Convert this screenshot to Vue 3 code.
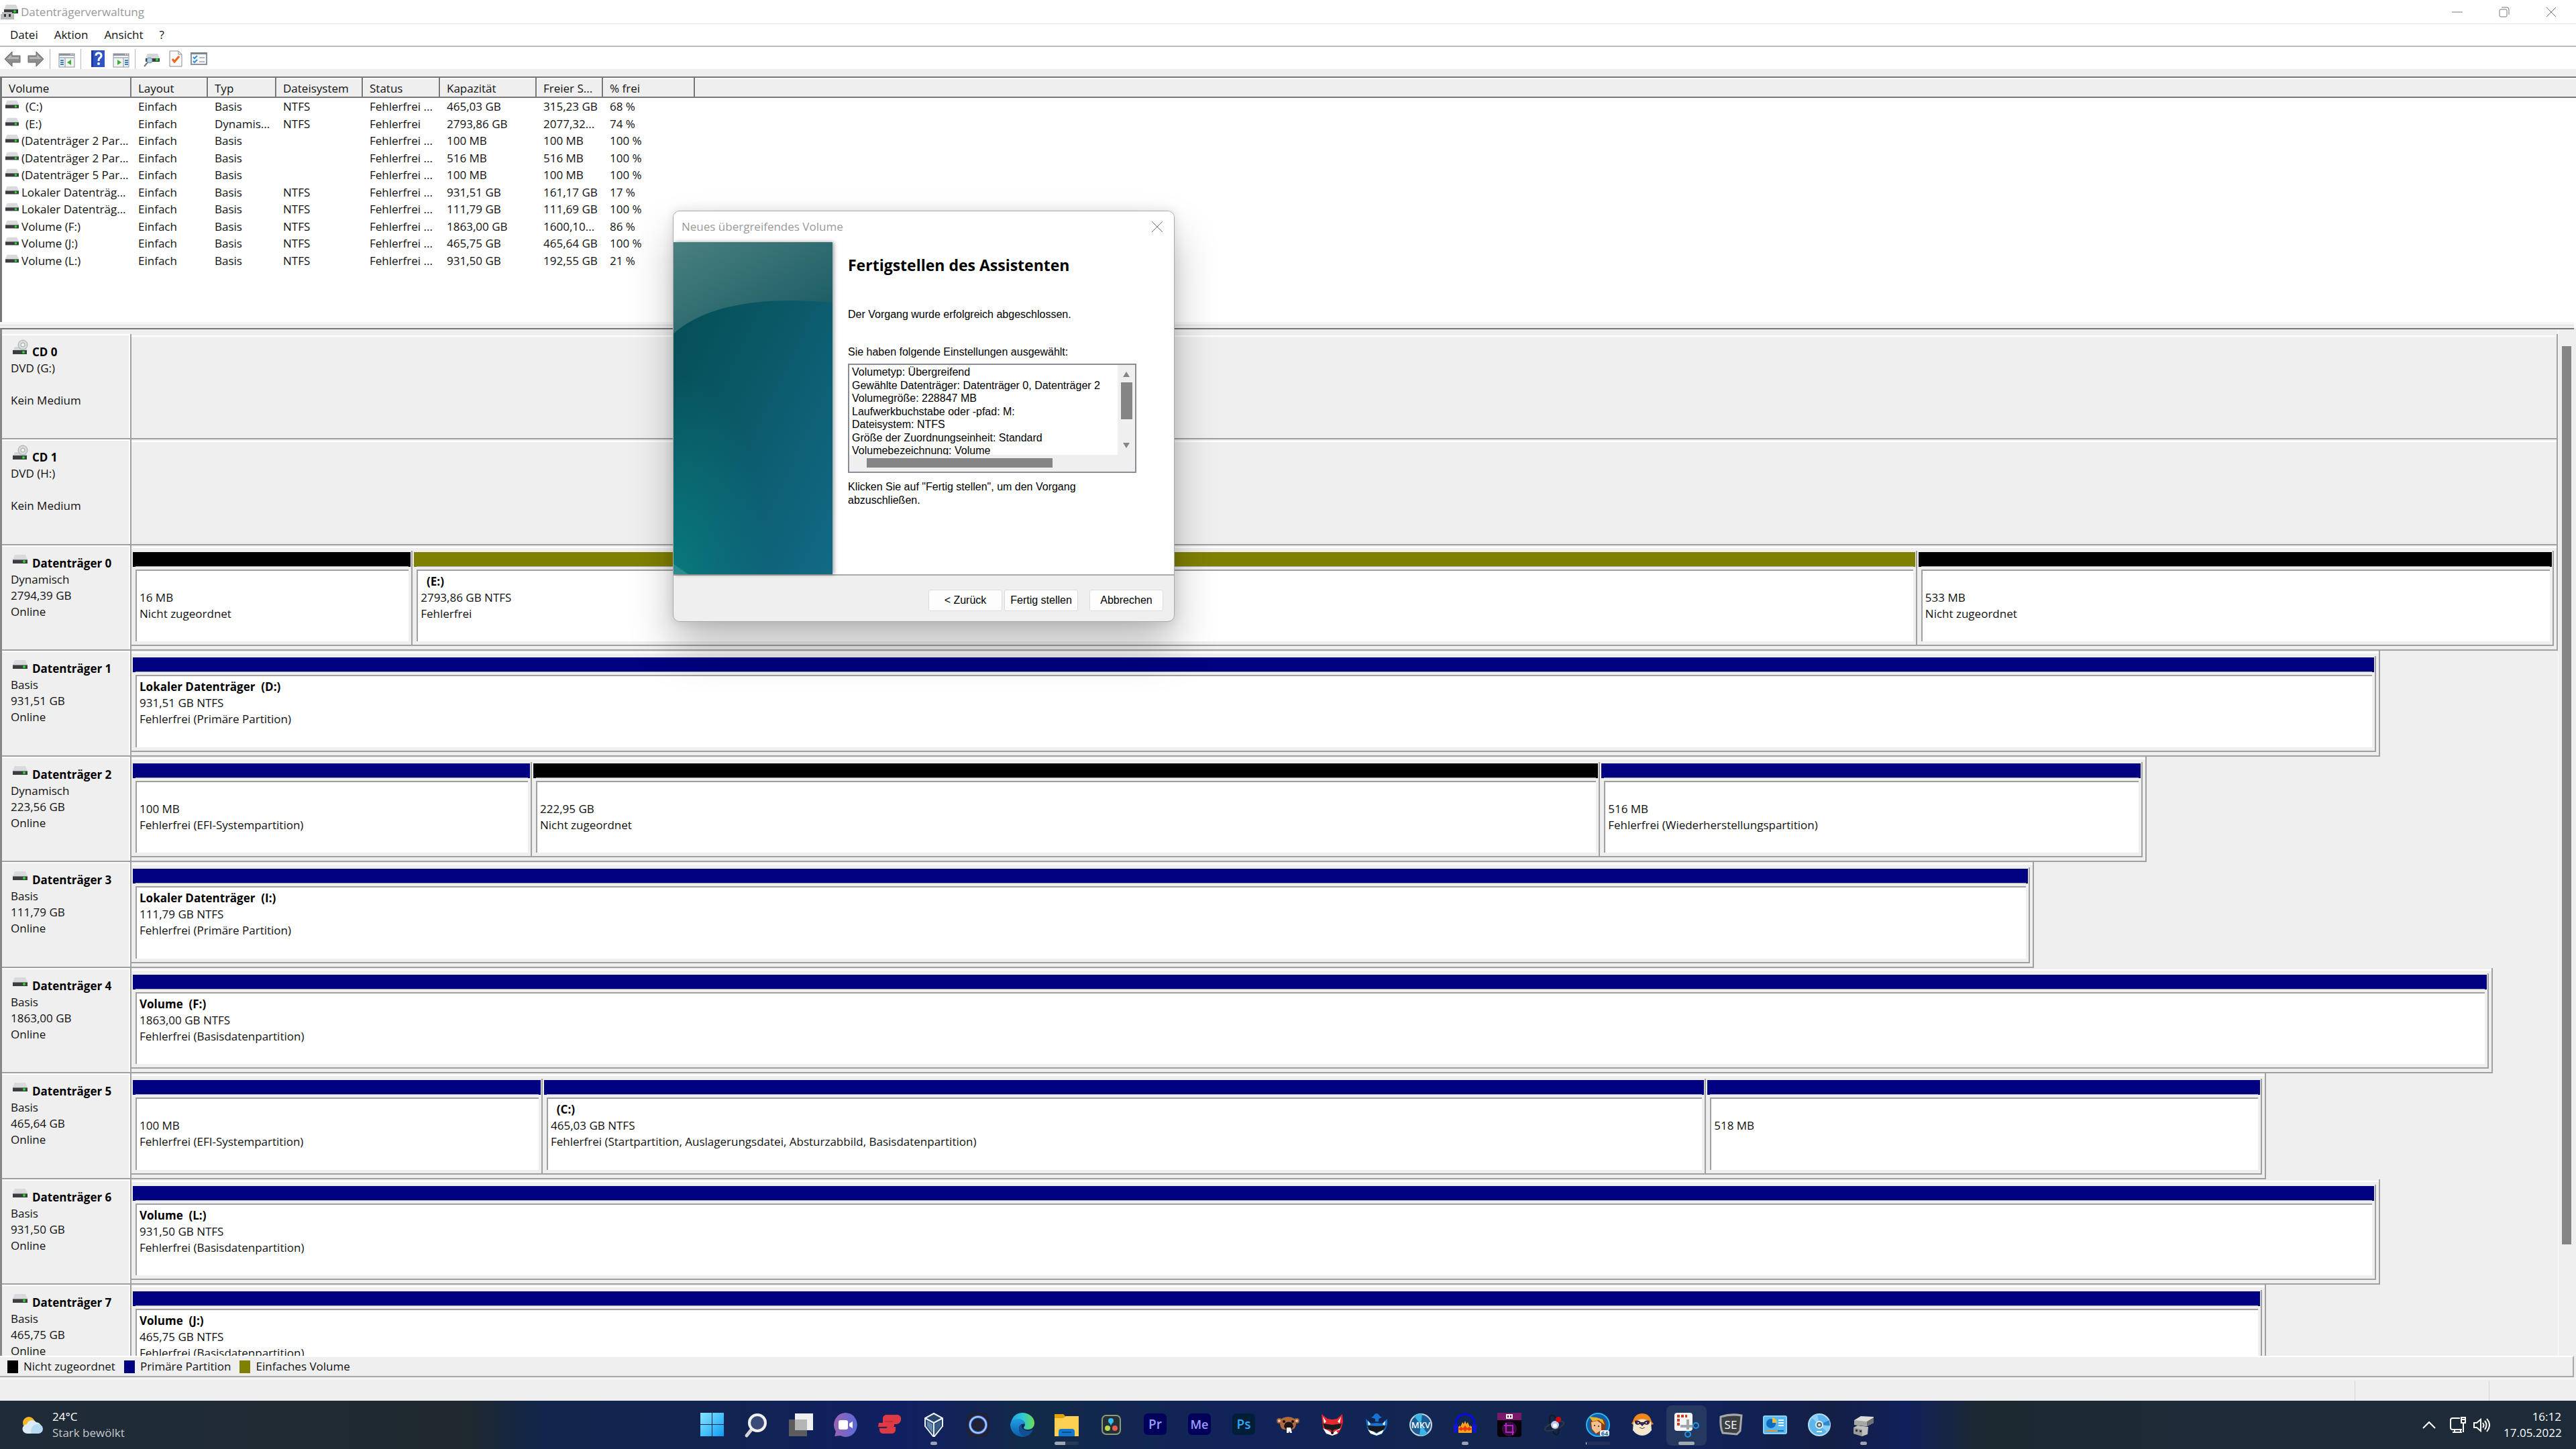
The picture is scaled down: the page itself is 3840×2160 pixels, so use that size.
<script setup>
const columns = [
  { title: 'Volume', width: 193 },
  { title: 'Layout', width: 114 },
  { title: 'Typ', width: 102 },
  { title: 'Dateisystem', width: 129 },
  { title: 'Status', width: 115 },
  { title: 'Kapazität', width: 144 },
  { title: 'Freier S...', width: 99 },
  { title: '% frei', width: 137 },
]

const volumes = [
  ['(C:)', 'Einfach', 'Basis', 'NTFS', 'Fehlerfrei ...', '465,03 GB', '315,23 GB', '68 %'],
  ['(E:)', 'Einfach', 'Dynamis...', 'NTFS', 'Fehlerfrei', '2793,86 GB', '2077,32...', '74 %'],
  ['(Datenträger 2 Par...', 'Einfach', 'Basis', '', 'Fehlerfrei ...', '100 MB', '100 MB', '100 %'],
  ['(Datenträger 2 Par...', 'Einfach', 'Basis', '', 'Fehlerfrei ...', '516 MB', '516 MB', '100 %'],
  ['(Datenträger 5 Par...', 'Einfach', 'Basis', '', 'Fehlerfrei ...', '100 MB', '100 MB', '100 %'],
  ['Lokaler Datenträg...', 'Einfach', 'Basis', 'NTFS', 'Fehlerfrei ...', '931,51 GB', '161,17 GB', '17 %'],
  ['Lokaler Datenträg...', 'Einfach', 'Basis', 'NTFS', 'Fehlerfrei ...', '111,79 GB', '111,69 GB', '100 %'],
  ['Volume (F:)', 'Einfach', 'Basis', 'NTFS', 'Fehlerfrei ...', '1863,00 GB', '1600,10...', '86 %'],
  ['Volume (J:)', 'Einfach', 'Basis', 'NTFS', 'Fehlerfrei ...', '465,75 GB', '465,64 GB', '100 %'],
  ['Volume (L:)', 'Einfach', 'Basis', 'NTFS', 'Fehlerfrei ...', '931,50 GB', '192,55 GB', '21 %'],
]

// span: share of the graph's full width, in units where the largest disk is FULL_SPAN
const FULL_SPAN = 3616
const disks = [
  { name: 'CD 0', cd: true, lines: ['DVD (G:)', '', 'Kein Medium'], span: 3616, parts: [] },
  { name: 'CD 1', cd: true, lines: ['DVD (H:)', '', 'Kein Medium'], span: 3616, parts: [] },
  {
    name: 'Datenträger 0', lines: ['Dynamisch', '2794,39 GB', 'Online'], span: 3616,
    parts: [
      { span: 418, kind: 'free', name: '', size: '16 MB', state: 'Nicht zugeordnet' },
      { span: 2245, kind: 'simple', name: '\u00a0 (E:)', size: '2793,86 GB NTFS', state: 'Fehlerfrei' },
      { span: 949, kind: 'free', name: '', size: '533 MB', state: 'Nicht zugeordnet' },
    ],
  },
  {
    name: 'Datenträger 1', lines: ['Basis', '931,51 GB', 'Online'], span: 3351,
    parts: [{ span: 1, kind: 'primary', name: 'Lokaler Datenträger \u00a0(D:)', size: '931,51 GB NTFS', state: 'Fehlerfrei (Primäre Partition)' }],
  },
  {
    name: 'Datenträger 2', lines: ['Dynamisch', '223,56 GB', 'Online'], span: 3003,
    parts: [
      { span: 596, kind: 'primary', name: '', size: '100 MB', state: 'Fehlerfrei (EFI-Systempartition)' },
      { span: 1593, kind: 'free', name: '', size: '222,95 GB', state: 'Nicht zugeordnet' },
      { span: 808, kind: 'primary', name: '', size: '516 MB', state: 'Fehlerfrei (Wiederherstellungspartition)' },
    ],
  },
  {
    name: 'Datenträger 3', lines: ['Basis', '111,79 GB', 'Online'], span: 2835,
    parts: [{ span: 1, kind: 'primary', name: 'Lokaler Datenträger \u00a0(I:)', size: '111,79 GB NTFS', state: 'Fehlerfrei (Primäre Partition)' }],
  },
  {
    name: 'Datenträger 4', lines: ['Basis', '1863,00 GB', 'Online'], span: 3519,
    parts: [{ span: 1, kind: 'primary', name: 'Volume \u00a0(F:)', size: '1863,00 GB NTFS', state: 'Fehlerfrei (Basisdatenpartition)' }],
  },
  {
    name: 'Datenträger 5', lines: ['Basis', '465,64 GB', 'Online'], span: 3181,
    parts: [
      { span: 612, kind: 'primary', name: '', size: '100 MB', state: 'Fehlerfrei (EFI-Systempartition)' },
      { span: 1735, kind: 'primary', name: '\u00a0 (C:)', size: '465,03 GB NTFS', state: 'Fehlerfrei (Startpartition, Auslagerungsdatei, Absturzabbild, Basisdatenpartition)' },
      { span: 828, kind: 'primary', name: '', size: '518 MB', state: '' },
    ],
  },
  {
    name: 'Datenträger 6', lines: ['Basis', '931,50 GB', 'Online'], span: 3351,
    parts: [{ span: 1, kind: 'primary', name: 'Volume \u00a0(L:)', size: '931,50 GB NTFS', state: 'Fehlerfrei (Basisdatenpartition)' }],
  },
  {
    name: 'Datenträger 7', lines: ['Basis', '465,75 GB', 'Online'], span: 3181,
    parts: [{ span: 1, kind: 'primary', name: 'Volume \u00a0(J:)', size: '465,75 GB NTFS', state: 'Fehlerfrei (Basisdatenpartition)' }],
  },
]

const legend = [
  { kind: 'free', label: 'Nicht zugeordnet' },
  { kind: 'primary', label: 'Primäre Partition' },
  { kind: 'simple', label: 'Einfaches Volume' },
]

const summary = [
  'Volumetyp: Übergreifend',
  'Gewählte Datenträger: Datenträger 0, Datenträger 2',
  'Volumegröße: 228847 MB',
  'Laufwerkbuchstabe oder -pfad: M:',
  'Dateisystem: NTFS',
  'Größe der Zuordnungseinheit: Standard',
  'Volumebezeichnung: Volume',
]

const drive = '<path d="M3 0h16l3 7H0z" fill="#d9dadd"/><path d="M0 7h22v6H0z" fill="#3b3e41"/><path d="M0 7h22v1H0z" fill="#77797c"/><circle cx="17" cy="10" r="2" fill="#22e02a"/>'
const consoleArt = '<rect x="1" y="5" width="23" height="20" fill="#f3f4f6" stroke="#8d949c"/><path d="M1 5h23v3H1z" fill="#8d949c"/><path d="M1 10h23v2H1z" fill="#b6bcc4"/><path d="M18 6h2M21 6h2" stroke="#fff"/>'

const tools = [
  { name: 'Zurück', art: '<path d="M1 13 12 2v6h12v10H12v6z" fill="#8e8e8e" stroke="#6a6a6a"/><path d="M4 13l7-7v4h11v3z" fill="#b4b4b4"/>' },
  { name: 'Vorwärts', art: '<path d="M24 13 13 2v6H1v10h12v6z" fill="#8e8e8e" stroke="#6a6a6a"/><path d="M21 13l-7-7v4H3v3z" fill="#b4b4b4"/>', end: true },
  { name: 'Konsolenstruktur einblenden', art: consoleArt + '<path d="M3 15h5M3 18h5M3 21h5" stroke="#3f7fbf" stroke-width="2"/><path d="M10 12v13" stroke="#8d949c"/><path d="M19 14v8l-6-4z" fill="#3fae29"/>', end: true },
  { name: 'Hilfe', art: '<rect x="3" y="0" width="20" height="25" fill="#2f55c4"/><path d="M3 0h3v25H3z" fill="#1f3c99"/><path d="M10 8q0-4 4-4t4 4q0 2-3 4-1 1-1 4" fill="none" stroke="#fff" stroke-width="3"/><circle cx="14" cy="20" r="2" fill="#fff"/>' },
  { name: 'Aktionsbereich einblenden', art: consoleArt + '<path d="M18 15h5M18 18h5M18 21h5" stroke="#3f7fbf" stroke-width="2"/><path d="M16 12v13" stroke="#8d949c"/><path d="M7 14v8l6-4z" fill="#3fae29"/>', end: true },
  { name: 'Datenträger neu einlesen', art: '<path d="M6 5h15l3 7H3z" fill="#d4d6d8"/><path d="M3 12h21v5H3z" fill="#3b3e41"/><circle cx="20" cy="14" r="2" fill="#22e02a"/><circle cx="9" cy="15" r="4" fill="#a9cfe6" stroke="#7894a6"/><path d="M6 18l-5 6" stroke="#66798a" stroke-width="2"/>' },
  { name: 'Eigenschaften', art: '<path d="M4 1h13l5 5v18H4z" fill="#fafafa" stroke="#8b8b8b"/><path d="M17 1v5h5" fill="none" stroke="#8b8b8b"/><path d="M8 13l3 4 7-8" fill="none" stroke="#f2641c" stroke-width="3"/>' },
  { name: 'Aufgabenliste', art: '<rect x="1" y="4" width="23" height="17" fill="#f6f7f8" stroke="#8d949c" stroke-width="2"/><path d="M0 3h25v3H0z" fill="#7d858d"/><path d="M4 10l2 2 4-4M4 16l2 2 4-4" fill="none" stroke="#2f8fd8" stroke-width="2"/><path d="M13 11h8M13 17h8" stroke="#b4bac0" stroke-width="2"/>' },
]

const apps = [
  { name: 'Start', art: '<defs><linearGradient id="win" gradientUnits="userSpaceOnUse" x1="0" y1="0" x2="36" y2="36"><stop offset="0" stop-color="#8be2ff"/><stop offset=".5" stop-color="#48c3fb"/><stop offset="1" stop-color="#0c95f5"/></linearGradient></defs><path d="M0 0h17v17H0zM18 0h17v17H18zM0 18h17v17H0zM18 18h17v17H18z" fill="url(#win)"/>' },
  { name: 'Suche', art: '<path d="M11 24 3 34" stroke="#d4d4d4" stroke-width="5" stroke-linecap="round"/><circle cx="19" cy="15" r="12" fill="#3a4a76" stroke="#f0f0f0" stroke-width="4"/>' },
  { name: 'Taskansicht', art: '<rect x="0" y="10" width="27" height="25" fill="#5c5c5c"/><rect x="9" y="1" width="27" height="25" fill="#f0f0f0"/><rect x="9" y="10" width="18" height="16" fill="#b5b5b5"/>' },
  { name: 'Chat', art: '<defs><linearGradient id="cha" x1="0" x2="1"><stop offset="0" stop-color="#9a63b4"/><stop offset="1" stop-color="#5b6ad8"/></linearGradient></defs><path d="M18 0a17 18 0 1 1-7 34l-9 1 2-7A17 18 0 0 1 18 0z" fill="url(#cha)"/><rect x="8" y="11" width="14" height="14" rx="3" fill="#fff"/><path d="M24 16l5-3v10l-5-3z" fill="#fff"/>' },
  { name: 'ExpressVPN', art: '<path d="M14 3h16a6 6 0 0 1 5 8 7 7 0 0 1-7 6h-3a4 4 0 0 1-1 4h3v5a6 6 0 0 1-6 5H9a6 6 0 0 1-6-5v-3h11v-2H1l1-6h6V8a6 6 0 0 1 6-5z" fill="#dd3a44"/><path d="M11 13h12M3 21h12" stroke="#a8222e"/>' },
  { name: 'VirtualBox', on: 'dot', art: '<path d="M18 1 31 8v12L19 35h-2L5 20V8z" fill="#26456b" stroke="#eef2f6" stroke-width="2"/><path d="M5 8l13 7 13-7M18 15v20" fill="none" stroke="#eef2f6" stroke-width="2"/><path d="M8 12l8 5v13L8 20z" fill="#6288b2"/><path d="M28 12l-8 5v13l8-10z" fill="#375d89"/>' },
  { name: 'Cortana', art: '<rect x="1" y="0" width="34" height="36" rx="9" fill="#1e2234"/><circle cx="18" cy="18" r="12" fill="none" stroke="#6d5df0" stroke-width="4"/><circle cx="18" cy="18" r="12" fill="none" stroke="#8be3fb" stroke-width="2"/>' },
  { name: 'Microsoft Edge', art: '<defs><linearGradient id="eda" x1="0" x2="1"><stop offset="0" stop-color="#1fa7e0"/><stop offset=".5" stop-color="#30c6d8"/><stop offset="1" stop-color="#69e04e"/></linearGradient><linearGradient id="edb" x1="0" y1="0" x2="0" y2="1"><stop offset="0" stop-color="#1ea0e4"/><stop offset="1" stop-color="#0c59a4"/></linearGradient></defs><path d="M1 15C3 5 10 0 18 0c10 0 18 7 18 15 0 7-5 10-10 10-4 0-6-1-6-3 0-1 2-2 2-5 0-4-4-7-9-7-6 0-10 2-12 5z" fill="url(#eda)"/><path d="M0 18C0 12 6 9 13 9c5 0 9 4 9 8-4-2-9 1-9 7 0 6 5 11 11 11-12 4-24-5-24-17z" fill="url(#edb)"/><path d="M13 24c0-4 2-6 4-7-1 6 3 10 9 10 4 0 8-2 8-2-3 7-8 10-12 10-5 0-9-5-9-11z" fill="#124f97"/>' },
  { name: 'Explorer', on: 'group', art: '<path d="M0 2h13l4 4v5H0z" fill="#e3a008"/><path d="M0 8h13l4-3h19v30H0z" fill="#fcd053"/><path d="M6 35V28a4 4 0 0 1 4-4h16a4 4 0 0 1 4 4v7z" fill="#1277cf"/><path d="M11 29h14" stroke="#0b4a8c" stroke-width="2"/>' },
  { name: 'DaVinci Resolve', art: '<rect x="5" y="4" width="27" height="28" rx="6" fill="#25303b" stroke="#8d9b76" stroke-width="2"/><circle cx="18" cy="12" r="4" fill="#35bdf0"/><path d="M15 13l3 6 3-6z" fill="#35bdf0"/><circle cx="13" cy="23" r="4" fill="#b8dc4a"/><circle cx="24" cy="23" r="4" fill="#f05a4c"/>' },
  { name: 'Premiere Pro', art: '<rect x="1" y="1" width="34" height="32" rx="6" fill="#00005b"/><text x="18" y="24" text-anchor="middle" font-family="Open Sans" font-weight="600" font-size="19" fill="#9d99ff">Pr</text>' },
  { name: 'Media Encoder', art: '<rect x="1" y="1" width="34" height="32" rx="6" fill="#00005b"/><text x="18" y="24" text-anchor="middle" font-family="Open Sans" font-weight="600" font-size="18" fill="#9d99ff">Me</text>' },
  { name: 'Photoshop', art: '<rect x="1" y="1" width="34" height="32" rx="6" fill="#001e36"/><text x="18" y="24" text-anchor="middle" font-family="Open Sans" font-weight="600" font-size="19" fill="#31a8ff">Ps</text>' },
  { name: 'Bär', art: '<circle cx="5" cy="12" r="4" fill="#a85f35"/><circle cx="31" cy="12" r="4" fill="#a85f35"/><circle cx="5" cy="12" r="2" fill="#f0c8a0"/><circle cx="31" cy="12" r="2" fill="#f0c8a0"/><path d="M8 9q10-6 20 0l2 8q-1 7-6 8H12q-5-1-6-8z" fill="#b06a3d"/><path d="M14 15q5-3 10 0l2 5q-1 5-7 5t-7-5z" fill="#1c1414"/><path d="M16 22h6l2 8h-3l-1-3-1 3h-3z" fill="#fff"/><circle cx="12" cy="13" r="2" fill="#111"/><circle cx="25" cy="13" r="2" fill="#111"/>' },
  { name: 'Roter Fuchs', art: '<path d="M2 2l9 7 7 1 7-1 8-7 1 12-3 10-6 8-7 2-8-3-6-9z" fill="#e8272d"/><path d="M4 6l5 7-3 3zM31 6l-5 7 3 3z" fill="#fff"/><path d="M4 16l14 2 14-2-3 8-8 1-3 3-3-3-8-1z" fill="#191a20"/><path d="M4 23l9 4 5 4 5-4 7-4-4 8-8 3-9-3z" fill="#fff"/><circle cx="18" cy="30" r="2" fill="#111"/><path d="M24 27l6-2-3 6z" fill="#e8272d"/>' },
  { name: 'Blauer Fuchs', art: '<path d="M13 5q5-8 10 0l3 2-5 2v4h-5V9l-6-2z" fill="#1673cf"/><path d="M2 9l8 7 8-1 8 1 8-7v8l-3 8-6 7-7 2-8-3-6-8z" fill="#1673cf"/><path d="M4 19l14 1 14-1-4 8-7 1-3 2-3-2-7-1z" fill="#17181e"/><path d="M5 25l8 3 5 3 5-3 6-3-3 6-8 3-9-3z" fill="#fff"/><path d="M5 12l4 5-3 2zM31 12l-4 5 3 2z" fill="#fff"/>' },
  { name: 'MakeMKV', art: '<circle cx="18" cy="18" r="16" fill="#1b5e97" stroke="#cfd5da" stroke-width="2"/><path d="M18 18 8 5a16 16 0 0 1 12-3zM18 18l10 13a16 16 0 0 1-12 3z" fill="#37b5e8"/><text x="18" y="23" text-anchor="middle" font-family="Open Sans" font-weight="600" font-size="13" fill="#fff">MKV</text>' },
  { name: 'Audacity', on: 'dot', art: '<path d="M4 26V16a14 14 0 0 1 28 0v10" fill="none" stroke="#0a0ae8" stroke-width="3"/><rect x="1" y="16" width="6" height="14" rx="3" fill="#1414d8"/><rect x="29" y="16" width="6" height="14" rx="3" fill="#1414d8"/><path d="M8 30V21l2-2 1 2 3-7 2 3 2-5 2 5 2-3 3 7 1-2 2 2v9z" fill="#f7a51c"/><path d="M8 24l4-3 3 2 3-4 3 4 3-2 4 3-4 3-3-2-3 3-3-3-3 2z" fill="#f03512"/>' },
  { name: 'Zuschneiden', art: '<path d="M0 0h36v11H0z" fill="#7a1a69"/><path d="M0 11h36v21a4 4 0 0 1-4 4H4a4 4 0 0 1-4-4z" fill="#08020a"/><circle cx="18" cy="24" r="11" fill="#3c0a42"/><path d="M14 3h8v5h-8zM18 3v5" fill="none" stroke="#fff" stroke-width="2"/><path d="M13 15v14h12M10 19h13v14" fill="none" stroke="#a928b8" stroke-width="2"/>' },
  { name: 'Atom', art: '<ellipse cx="19" cy="18" rx="6" ry="15" fill="none" stroke="#17191f" stroke-width="2" transform="rotate(-15 19 18)"/><ellipse cx="19" cy="20" rx="15" ry="5" fill="none" stroke="#333844" stroke-width="2" transform="rotate(-20 19 20)"/><circle cx="20" cy="18" r="6" fill="#b9c8f0"/><circle cx="20" cy="19" r="3" fill="#fff"/><circle cx="25" cy="10" r="4" fill="#d4060c"/>' },
  { name: 'DVDFab', on: 'line', art: '<circle cx="18" cy="18" r="17" fill="#135fa8" stroke="#2bb4f0" stroke-width="2"/><path d="M9 8l9 3 8-2 4 7-2 12-9 5-9-4-4-12z" fill="#8a3b16"/><path d="M8 14l9-2 6 4v10l-8 5-6-7z" fill="#f0c090"/><path d="M5 6l5 7 9-2 9 7-3-8-9-3z" fill="#e8b32a"/><circle cx="13" cy="19" r="1" fill="#222"/><circle cx="19" cy="20" r="1" fill="#222"/><rect x="21" y="26" width="14" height="9" rx="3" fill="#eaf4fb"/><text x="28" y="34" text-anchor="middle" font-family="Open Sans" font-weight="700" font-size="9" fill="#1a5ea3">64</text>' },
  { name: 'Faultier', art: '<path d="M4 13Q7 1 18 1t14 12l3 4-4 1-13-8-13 8-3-2z" fill="#f0861c"/><path d="M5 14q13-9 26 0l1 12q-6 8-14 8T4 26z" fill="#f4e6cf"/><path d="M7 12q5-2 9 2h4q4-4 9-2 1 5-4 6l-4-1-3 3-3-3-4 1q-5-1-4-6z" fill="#3a2745"/><circle cx="12" cy="15" r="1" fill="#fff"/><circle cx="24" cy="15" r="1" fill="#fff"/><path d="M14 22q4 3 8 0" fill="none" stroke="#6a3f2c"/>' },
  { name: 'Snipping Tool', on: 'active', art: '<rect x="0" y="0" width="27" height="27" rx="4" fill="#f4f5f7"/><path d="M4 3h4v4H4zM10 3h4v4h-4zM16 3h3v4h-3zM4 9h4v4H4zM4 15h4v4H4z" fill="#d83b1a"/><path d="M20 10v15M9 20h18" stroke="#a0a5aa" stroke-width="4"/><circle cx="32" cy="19" r="4" fill="none" stroke="#1b97e8" stroke-width="2"/><circle cx="20" cy="32" r="4" fill="none" stroke="#1b97e8" stroke-width="2"/>' },
  { name: 'SE', art: '<path d="M3 6q15-5 31-2l-2 23-5 5-21-2q-4-8-3-24z" fill="#3d4043" stroke="#a5a7a9" stroke-width="3"/><text x="18" y="24" text-anchor="middle" font-family="Open Sans" font-size="17" fill="#fff">SE</text>' },
  { name: 'Systemsteuerung', art: '<rect x="1" y="5" width="34" height="26" rx="2" fill="#58b5ef" stroke="#8ad2fa" stroke-width="2"/><circle cx="12" cy="16" r="7" fill="#0c6ec0"/><path d="M14 15V7a8 8 0 0 1 7 8z" fill="#f7bd3d"/><path d="M23 11h8M23 15h8M23 19h8" stroke="#eaf6fd" stroke-width="2"/><path d="M5 27h17" stroke="#e3932a" stroke-width="2"/><path d="M22 27h9" stroke="#0c6ec0" stroke-width="2"/>' },
  { name: 'Blu-ray', art: '<circle cx="18" cy="18" r="16" fill="#5cb6ec" stroke="#b5dff5" stroke-width="2"/><path d="M18 18 6 7a16 16 0 0 1 9-5zM18 18l12 11a16 16 0 0 0 4-9z" fill="#8fd0f5"/><path d="M18 18 33 11l1 8z" fill="#2e86cc"/><circle cx="18" cy="18" r="5" fill="#56646f" stroke="#dff1fa" stroke-width="2"/><circle cx="18" cy="18" r="2" fill="#dfe6ea"/><path d="M14 28h8" stroke="#fff" stroke-width="2"/>' },
  { name: 'Datenträgerverwaltung', on: 'dot', art: '<path d="M4 11 14 5l19 1v9l-10 5-19-2z" fill="#dcdcd8"/><path d="M4 11l19 2v7L4 18z" fill="#a7a8a6"/><path d="M23 13l10-6v8l-10 5z" fill="#6f7170"/><path d="M3 22l6-3 16 2-1 11-8 3-13-4z" fill="#bfc0be"/><path d="M3 22l13 3v10L3 31z" fill="#989a98"/><rect x="6" y="25" width="3" height="3" fill="#333"/><rect x="12" y="26" width="3" height="3" fill="#333"/>' },
]
</script>

<template>
  <div class="desktop">
    <main class="window">
      <header class="titlebar">
        <svg class="title-icon" viewBox="0 0 26 24" aria-hidden="true">
          <path d="M8 1h15l3 7H5z" fill="#d4d6d9" /><path d="M5 8h21v6H5z" fill="#3a3d40" /><circle cx="21" cy="11" r="2" fill="#22e02a" />
          <path d="M2 12h15v3h3v8H0v-8h2z" fill="#b9bbbd" /><path d="M5 15h3v4H5zM12 15h3v4h-3z" fill="#333" />
        </svg>
        <h1>Datenträgerverwaltung</h1>
        <div class="controls">
          <button aria-label="Minimieren"><svg viewBox="0 0 16 16"><path d="M0 8h16" /></svg></button>
          <button aria-label="Wiederherstellen"><svg viewBox="0 0 16 16"><rect x="1" y="4" width="11" height="11" rx="2" /><path d="M4 1h8a3 3 0 0 1 3 3v8" /></svg></button>
          <button aria-label="Schließen"><svg viewBox="0 0 16 16"><path d="M1 1l14 14M15 1 1 15" /></svg></button>
        </div>
      </header>

      <nav class="menubar">
        <button>Datei</button><button>Aktion</button><button>Ansicht</button><button>?</button>
      </nav>

      <div class="toolbar">
        <template v-for="tool in tools" :key="tool.name">
          <button :aria-label="tool.name"><svg viewBox="0 0 26 26" v-html="tool.art"></svg></button>
          <span v-if="tool.end" class="divider"></span>
        </template>
      </div>

      <section class="volumes">
        <table>
          <colgroup>
            <col v-for="c in columns" :key="c.title" :style="{ width: c.width + 'px' }" />
            <col />
          </colgroup>
          <thead>
            <tr><th v-for="c in columns" :key="c.title" scope="col">{{ c.title }}</th><td></td></tr>
          </thead>
          <tbody>
            <tr v-for="(v, i) in volumes" :key="i">
              <td v-for="(cell, k) in v" :key="k">
                <span v-if="k === 0" class="volume-name">
                  <svg viewBox="0 0 22 14" aria-hidden="true" v-html="drive"></svg>
                  <span :class="{ letter: cell.length === 4 }">{{ cell }}</span>
                </span>
                <template v-else>{{ cell }}</template>
              </td>
              <td></td>
            </tr>
          </tbody>
        </table>
      </section>

      <section class="disks">
        <div class="disk-list">
          <article v-for="d in disks" :key="d.name" class="disk">
            <div class="disk-label">
              <h2>
                <svg v-if="d.cd" viewBox="0 0 24 24" aria-hidden="true">
                  <path d="M3 11h16l3 6H0z" fill="#d3d5d8" /><circle cx="15" cy="8" r="7" fill="#d5dadb" stroke="#a4abac" /><circle cx="15" cy="8" r="3" fill="#eef0f0" stroke="#a4abac" />
                  <path d="M0 16h21v6H0z" fill="#3b3e41" /><circle cx="16" cy="19" r="2" fill="#22e02a" />
                </svg>
                <svg v-else viewBox="0 -6 24 24" aria-hidden="true" v-html="drive"></svg>
                {{ d.name }}
              </h2>
              <p v-for="(line, i) in d.lines" :key="i">{{ line }}</p>
            </div>
            <div class="graph">
              <div class="strip" :style="{ width: (d.span / FULL_SPAN) * 100 + '%' }">
                <div v-for="(p, i) in d.parts" :key="i" class="part" :style="{ flexGrow: p.span }">
                  <div class="bar" :class="p.kind"></div>
                  <div class="part-body">
                    <strong>{{ p.name }}</strong>
                    <span>{{ p.size }}</span>
                    <span>{{ p.state }}</span>
                  </div>
                </div>
              </div>
            </div>
          </article>
        </div>
        <div class="scroll"><div class="thumb"></div></div>
      </section>

      <ul class="legend">
        <li v-for="l in legend" :key="l.kind"><i :class="l.kind"></i>{{ l.label }}</li>
      </ul>
      <footer class="statusbar"><span></span><span></span></footer>

      <section class="dialog" role="dialog" aria-labelledby="wizard-title">
        <header>
          <span id="wizard-title">Neues übergreifendes Volume</span>
          <button aria-label="Schließen"><svg viewBox="0 0 16 16"><path d="M0 0l16 16M16 0 0 16" /></svg></button>
        </header>
        <div class="wizard">
          <svg class="art" viewBox="0 0 237 495" preserveAspectRatio="none" aria-hidden="true">
            <defs>
              <linearGradient id="deep" x1="0" y1="0" x2="1" y2="1"><stop offset="0" stop-color="#034c50" /><stop offset=".5" stop-color="#0b5a6a" /><stop offset="1" stop-color="#126a86" /></linearGradient>
              <linearGradient id="pale" x1="0" y1="0" x2="1" y2="1"><stop offset="0" stop-color="#4a8080" /><stop offset="1" stop-color="#145861" /></linearGradient>
              <radialGradient id="glow" cx="0" cy="1" r=".6"><stop offset="0" stop-color="#088082" stop-opacity=".8" /><stop offset="1" stop-color="#088082" stop-opacity="0" /></radialGradient>
            </defs>
            <rect width="237" height="495" fill="url(#deep)" />
            <rect width="237" height="495" fill="url(#glow)" />
            <path d="M0 0h237v90C130 80 48 94 0 136z" fill="url(#pale)" />
            <path d="M0 480q12 8 22 15H0z" fill="#2a8c8e" />
          </svg>
          <div class="wizard-text">
            <h2>Fertigstellen des Assistenten</h2>
            <p class="done">Der Vorgang wurde erfolgreich abgeschlossen.</p>
            <p class="intro">Sie haben folgende Einstellungen ausgewählt:</p>
            <div class="listbox">
              <ul><li v-for="s in summary" :key="s">{{ s }}</li></ul>
              <div class="vscroll">
                <svg viewBox="0 0 10 8"><path d="M0 8 5 0l5 8z" /></svg>
                <div></div>
                <svg viewBox="0 0 10 8"><path d="M0 0l5 8 5-8z" /></svg>
              </div>
              <div class="hscroll"><div></div></div>
            </div>
            <p class="hint">Klicken Sie auf "Fertig stellen", um den Vorgang<br />abzuschließen.</p>
          </div>
        </div>
        <footer><button>&lt; Zurück</button><button>Fertig stellen</button><button class="cancel">Abbrechen</button></footer>
      </section>
    </main>

    <footer class="taskbar">
      <button class="weather">
        <svg viewBox="0 0 32 28" aria-hidden="true"><circle cx="10" cy="11" r="9" fill="#f8b526" /><path d="M8 27a7 7 0 0 1-1-14 8 8 0 0 1 14-3 9 9 0 0 1 3 17z" fill="#dcebf7" /><path d="M14 27a10 10 0 0 1 10-14 7 7 0 0 1 0 14z" fill="#b5daf1" /></svg>
        <span><b>24°C</b><small>Stark bewölkt</small></span>
      </button>
      <div class="apps">
        <button v-for="a in apps" :key="a.name" :aria-label="a.name" :class="a.on">
          <svg viewBox="0 0 36 36" v-html="a.art"></svg>
          <i v-if="a.on"></i>
        </button>
      </div>
      <div class="tray">
        <button aria-label="Ausgeblendete Symbole"><svg class="chevron" viewBox="0 0 20 12"><path d="M1 11l9-9 9 9" /></svg></button>
        <button aria-label="Netzwerk und Ton">
          <svg viewBox="0 0 26 26"><path d="M16 3H5a3 3 0 0 0-3 3v11a3 3 0 0 0 3 3h14M8 20v4M17 20v4M5 24h14M18 2h6v8h-6zM18 5h6M21 10v14" /></svg>
          <svg viewBox="0 0 26 26"><path d="M2 10v7h4l6 5V5l-6 5zM15 10q3 4 0 7M18 7q5 6 0 13M21 4q8 9 0 19" /></svg>
        </button>
        <time datetime="2022-05-17T16:12">16:12<br />17.05.2022</time>
      </div>
    </footer>
  </div>
</template>

<style>
body { margin: 0; }
</style>

<style scoped>
.desktop { display: flex; flex-direction: column; height: 100vh; overflow: hidden; font: 17px/24px "Open Sans", "Noto Sans", sans-serif; color: #111; background: #efefef; }
button { font: inherit; color: inherit; border: 0; background: none; padding: 0; }
h1, h2, p, ul { margin: 0; padding: 0; font-size: inherit; list-style: none; }
svg { display: block; }
.window { position: relative; flex: 1; min-height: 0; display: flex; flex-direction: column; }

.titlebar { display: flex; align-items: center; height: 35px; background: #fff; border-bottom: 1px solid #e4e4e4; padding: 0 2px 0 1px; }
.title-icon { width: 26px; height: 24px; margin-right: 4px; }
.titlebar h1 { font-weight: 400; color: #999; flex: 1; }
.controls { display: flex; }
.controls button { width: 70px; height: 32px; display: grid; place-items: center; }
.controls svg { width: 16px; height: 16px; fill: none; stroke: #777; stroke-width: 1; }

.menubar { display: flex; gap: 24px; height: 32px; padding-left: 15px; background: #fff; border-bottom: 2px solid #bcbcbe; }

.toolbar { display: flex; align-items: center; gap: 9px; height: 31px; padding: 2px 6px 0; background: #fff; }
.toolbar svg { width: 26px; height: 26px; }
.toolbar .divider { width: 1px; height: 30px; background: #b8b8b8; margin: 0 3px 0 -2px; }

.volumes { height: 373px; margin-top: 11px; border: solid #777; border-width: 2px 0 0 3px; background: #fff; }
.volumes table { width: 100%; table-layout: fixed; border-collapse: separate; border-spacing: 0; }
.volumes th, .volumes td { padding: 0; white-space: nowrap; font-weight: 400; text-align: left; padding-left: 10px; }
.volumes thead tr { height: 30px; }
.volumes thead th, .volumes thead td { background: #efefef; border-bottom: 2px solid #777; box-shadow: inset 1px 2px #fff; padding-top: 3px; box-sizing: border-box; }
.volumes thead th { border-right: 2px solid #777; }
.volumes tbody tr { height: 25px; }
.volumes tbody tr:nth-child(even) { height: 26px; }
.volumes tbody td { height: 25px; line-height: 25px; }
.volumes tbody td:first-child { padding-left: 5px; }
.volume-name { display: flex; gap: 4px; }
.volume-name svg { width: 20px; height: 14px; margin-top: 3px; }
.volume-name .letter { padding-left: 6px; }

.disks { flex: 1; min-height: 0; display: flex; margin-right: 3px; border-top: 2px solid #777; border-left: 3px solid #888; box-shadow: 0 -4px #efefef, 0 -5px #ddd, 0 -9px #f6f6f6; }
.disk-list { flex: 1; min-width: 0; overflow: hidden; padding-top: 7px; }
.disk { display: flex; height: 157px; }
.disk:nth-child(even) { height: 158px; }
.disk-label { width: 178px; border: solid #a0a0a0; border-width: 0 2px 2px 0; box-shadow: inset 0 2px #fff, inset -2px 0 #fff; padding: 15px 0 0 13px; box-sizing: content-box; height: calc(100% - 17px); }
.disk-label h2 { display: flex; gap: 5px; font-size: 17px; font-weight: 700; margin-left: 3px; color: #000; white-space: nowrap; }
.disk-label svg { width: 24px; height: 24px; margin-top: -7px; }
.disk-label p { height: 24px; }
.graph { flex: 1; min-width: 0; }
.strip { display: flex; height: 100%; box-sizing: border-box; padding: 8px 4px 5px 0; border: solid #a0a0a0; border-width: 0 2px 2px 0; box-shadow: inset 0 2px #efefef, inset 0 4px #fff; }
.part { flex-basis: 0; min-width: 0; display: flex; flex-direction: column; border: solid #a0a0a0; border-width: 0 2px 2px 0; }
.bar { height: 22px; margin: 2px 1px 0 2px; }
.free { background: #000; }
.primary { background: #000080; }
.simple { background: #808000; }
.part-body { flex: 1; display: flex; flex-direction: column; padding: 4px; background: #fff; border: solid #a0a0a0; border-width: 2px 0 0 2px; margin: 4px 4px 5px 6px; box-shadow: 0 -4px #efefef, 0 -5px #aaa; white-space: nowrap; }
.part-body strong { height: 24px; font-size: 17px; white-space: pre; color: #000; }
.scroll { width: 24px; border-left: 1px solid #fafafa; padding: 25px 3px 0 5px; box-sizing: border-box; }
.thumb { width: 14px; height: 89%; background: #858585; }

.legend { display: flex; gap: 13px; height: 28px; align-items: center; padding-left: 11px; border-top: 2px solid #fff; border-bottom: 2px solid #a8a8a8; border-right: 2px solid #a8a8a8; margin-right: 3px; background: #efefef; white-space: nowrap; }
.legend li { display: flex; align-items: center; gap: 8px; }
.legend i { width: 16px; height: 19px; }
.statusbar { display: flex; justify-content: flex-end; gap: 199px; height: 33px; margin-top: 2px; padding: 2px 129px 0 0; border-top: 1px solid #fff; box-sizing: border-box; }
.statusbar span { width: 1px; background: #d5d5d5; }

.dialog { position: absolute; left: 1003px; top: 314px; width: 746px; border: 1px solid #aaa; border-radius: 10px; overflow: hidden; background: #efefef; box-shadow: 0 0 16px rgba(0, 0, 0, .12), 0 38px 64px rgba(0, 0, 0, .26); font: 16px/20px "Liberation Sans", Arial, sans-serif; color: #000; }
.dialog header { display: flex; align-items: center; justify-content: space-between; height: 46px; padding: 0 17px 0 12px; background: #fff; font: 17px/24px "Open Sans", sans-serif; color: #999; }
.dialog header svg { width: 16px; height: 16px; stroke: #777; }
.wizard { display: flex; height: 495px; background: #fff; border-bottom: 2px solid #a8abac; }
.art { width: 237px; height: 495px; box-shadow: 2px 0 6px rgba(0, 0, 0, .4); }
.wizard-text { padding: 19px 0 0 23px; }
.wizard-text h2 { font: 700 23px/30px "Open Sans", sans-serif; }
.wizard-text .done { margin-top: 49px; }
.wizard-text .intro { margin-top: 36px; }
.listbox { width: 426px; height: 159px; margin: 7px 0 11px; border: 2px solid #8a8d96; display: grid; grid-template: 134px 1fr / 1fr 26px; }
.listbox ul { overflow: hidden; padding: 1px 0 0 4px; white-space: nowrap; }
.listbox li { height: 20px; }
.listbox li:nth-child(even) { height: 19px; }
.vscroll { display: flex; flex-direction: column; align-items: center; background: #efefef; padding: 10px 0; gap: 8px; box-sizing: border-box; }
.vscroll div { width: 17px; height: 55px; margin-bottom: auto; background: #858585; }
.vscroll svg { width: 10px; height: 8px; fill: #858585; }
.hscroll { grid-column: 1 / -1; background: #efefef; padding: 5px 0 0 26px; }
.hscroll div { width: 277px; height: 14px; background: #858585; }
.dialog footer { display: flex; justify-content: flex-end; gap: 3px; height: 47px; padding: 21px 16px 0 0; }
.dialog footer button { width: 110px; height: 32px; background: #fdfdfd; border: 1px solid #dcdcdc; border-radius: 3px; }
.dialog footer .cancel { margin-left: 14px; }

.taskbar { display: grid; grid-template-columns: 1fr auto 1fr; align-items: center; height: 72px; color: #fff; background: linear-gradient(90deg, #1e2b38 0, #20292f 18%, #11254b 21%, #112350 28%, #101f62 35%, #122a48 40%, #10235a 48%, #12274e 58%, #10225a 66%, #141f45 71%, #10205a 74%, #1d2930 77%, #1d2b38 85%); }
.weather { display: flex; align-items: center; gap: 13px; padding-left: 33px; text-align: left; }
.weather svg { width: 32px; height: 28px; }
.weather b, .weather small { display: block; font-weight: 400; font-size: 17px; }
.weather small { color: #c3c8cc; }
.apps { display: flex; height: 72px; }
.apps button { position: relative; width: 66px; display: grid; place-items: center; }
.apps svg { width: 36px; height: 36px; overflow: visible; }
.apps i { position: absolute; bottom: 6px; left: 28px; width: 10px; height: 5px; border-radius: 3px; background: #9aa1b5; }
.apps .group i { left: 15px; width: 36px; background: linear-gradient(90deg, #9ca6b5 16px, #263a55 16px); }
.apps .line i { left: 15px; width: 36px; background: linear-gradient(90deg, #fff 1px, #20305a 1px); }
.apps .active i { left: 21px; width: 24px; background: #a0abb0; }
.apps .active::before { content: ""; position: absolute; inset: 7px 3px 5px; border-radius: 8px; background: #25385e; }
.apps .active svg { position: relative; }
.tray { display: flex; align-items: center; justify-content: flex-end; padding-right: 22px; }
.tray button { display: flex; gap: 9px; margin-right: 20px; }
.tray svg { width: 26px; height: 26px; fill: none; stroke: #fff; stroke-width: 2; }
.tray .chevron { width: 20px; height: 12px; }
.tray time { text-align: right; width: 86px; }
</style>
